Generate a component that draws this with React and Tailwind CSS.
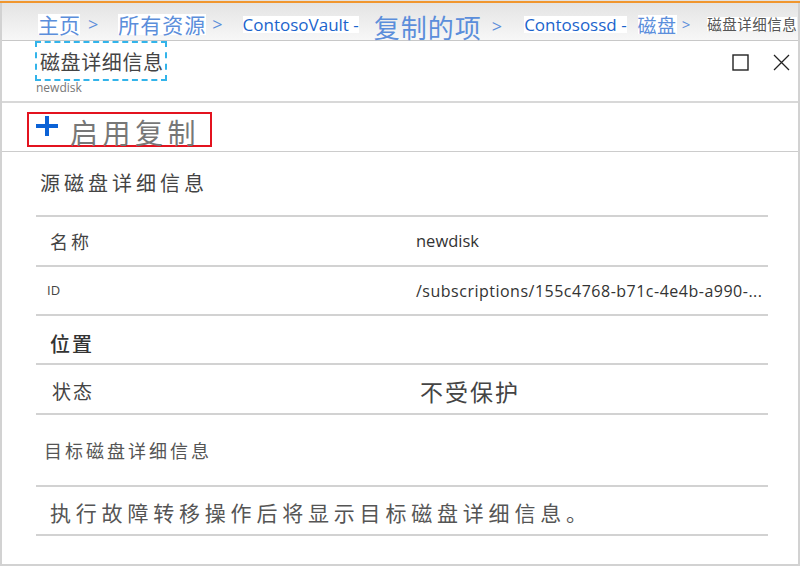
import React from "react";

const cjk = { fontFamily: '"Noto Sans CJK SC", "Noto Sans", sans-serif' };
const latin = { fontFamily: '"Open Sans", "Noto Sans CJK SC", sans-serif' };

export default function App() {
    return (
        <div className="w-[800px] h-[566px] bg-white overflow-hidden flex flex-col" style={cjk}>
            <div className="h-[1px] bg-[#e2e2e2]"></div>
            <div className="h-[2px] bg-[#f0962e]"></div>
            <div className="flex-1 flex flex-col border-x-2 border-b-2 border-[#d2d2d2]">
                {/* breadcrumb */}
                <div className="h-[38px] shrink-0 bg-gradient-to-b from-[#e4e4e4] to-[#f7f7f7] border-b border-[#c8c8c8] flex items-center pt-[5px] pl-[36px] whitespace-nowrap relative z-10">
                    <span className="bg-white text-[21px] text-[#5b8edb] leading-none">主页</span>
                    <span className="ml-[8px] text-[18px] text-[#5b8edb] leading-none" style={latin}>&gt;</span>
                    <span className="ml-[20px] bg-white text-[21px] text-[#5b8edb] leading-none tracking-[1px]">所有资源</span>
                    <span className="ml-[6px] text-[18px] text-[#5b8edb] leading-none" style={latin}>&gt;</span>
                    <span className="ml-[20px] bg-white text-[17px] text-[#1b64cc] leading-none" style={latin}>ContosoVault -</span>
                    <span className="ml-[15px] text-[26px] text-[#5b8edb] leading-none pt-[6px] tracking-[1px]">复制的项</span>
                    <span className="ml-[10px] text-[18px] text-[#5b8edb] leading-none pt-[4px]" style={latin}>&gt;</span>
                    <span className="ml-[22px] bg-white text-[17px] text-[#1b64cc] leading-none" style={latin}>Contosossd -</span>
                    <span className="ml-[11px] bg-white text-[19px] text-[#5b8edb] leading-none tracking-[0.5px]">磁盘</span>
                    <span className="ml-[5px] text-[15px] text-[#5b8edb] leading-none" style={latin}>&gt;</span>
                    <span className="ml-[17px] bg-white text-[14.5px] text-[#555] leading-none tracking-[0.5px]">磁盘详细信息</span>
                </div>

                {/* title */}
                <div className="h-[62px] shrink-0 flex items-start justify-between border-b-2 border-[#d8d8d8]">
                    <div className="pl-[33px]">
                        <div className="h-[40px] w-[132px] border-2 border-dashed border-[#33b4ea] flex items-center pl-[3px] pt-[2px] whitespace-nowrap overflow-visible">
                            <span className="text-[20px] text-[#444] tracking-[0.6px] leading-none">磁盘详细信息</span>
                        </div>
                        <div className="text-[12px] text-[#777] leading-none mt-[1px] pl-[1px]" style={latin}>newdisk</div>
                    </div>
                    <div className="flex items-center gap-[24px] pr-[8px] pt-[13px]">
                        <svg width="17" height="17" viewBox="0 0 17 17">
                            <rect x="1" y="1" width="15" height="15" fill="none" stroke="#222" strokeWidth="1.4" />
                        </svg>
                        <svg width="17" height="17" viewBox="0 0 17 17">
                            <path d="M1 1 L16 16 M16 1 L1 16" stroke="#222" strokeWidth="1.3" />
                        </svg>
                    </div>
                </div>

                {/* command bar */}
                <div className="h-[49px] shrink-0 border-b border-[#cccccc] pl-[25px] pt-[9px]">
                    <div className="w-[185px] h-[35px] border-2 border-[#e3131f] flex items-center pl-[7px]">
                        <svg width="22" height="20" viewBox="0 0 22 20" className="-mt-[8px]">
                            <path d="M11 0 V20 M0 10 H22" stroke="#0b62d6" strokeWidth="4" />
                        </svg>
                        <span className="ml-[12px] text-[28px] text-[#777] tracking-[4.5px] leading-none mt-[5px] whitespace-nowrap">启用复制</span>
                    </div>
                </div>

                {/* content */}
                <div className="ml-[34px] w-[732px] flex flex-col">
                    <div className="h-[65px] border-b-2 border-[#d2d2d2] flex items-center pl-[4px] pb-[2px]">
                        <span className="text-[20px] text-[#444] tracking-[4px] whitespace-nowrap">源磁盘详细信息</span>
                    </div>
                    <div className="h-[50px] border-b-2 border-[#d2d2d2] flex items-center">
                        <span className="w-[380px] pl-[14px] text-[18px] text-[#444] tracking-[3px]">名称</span>
                        <span className="text-[16.5px] text-[#333]" style={latin}>newdisk</span>
                    </div>
                    <div className="h-[49px] border-b-2 border-[#d2d2d2] flex items-center">
                        <span className="w-[380px] pl-[11px] text-[13px] text-[#444]" style={latin}>ID</span>
                        <span className="text-[16px] text-[#333] tracking-[0.5px] whitespace-nowrap" style={latin}>/subscriptions/155c4768-b71c-4e4b-a990-...</span>
                    </div>
                    <div className="h-[49px] border-b-2 border-[#d2d2d2] flex items-center pl-[14px] pt-[8px]">
                        <span className="text-[20px] text-[#333] font-medium tracking-[2px]">位置</span>
                    </div>
                    <div className="h-[50px] border-b-2 border-[#d2d2d2] flex items-center pt-[4px]">
                        <span className="w-[384px] pl-[16px] text-[19px] text-[#444] tracking-[2px]">状态</span>
                        <span className="text-[23px] text-[#444] tracking-[2px]">不受保护</span>
                    </div>
                    <div className="h-[72px] border-b-2 border-[#d2d2d2] flex items-center pl-[8px]">
                        <span className="text-[18px] text-[#555] tracking-[3px] whitespace-nowrap">目标磁盘详细信息</span>
                    </div>
                    <div className="h-[49px] border-b-2 border-[#d2d2d2] flex items-center pl-[14px] pt-[4px]">
                        <span className="text-[21px] text-[#555] tracking-[4.8px] whitespace-nowrap">执行故障转移操作后将显示目标磁盘详细信息。</span>
                    </div>
                </div>
            </div>
        </div>
    );
}
